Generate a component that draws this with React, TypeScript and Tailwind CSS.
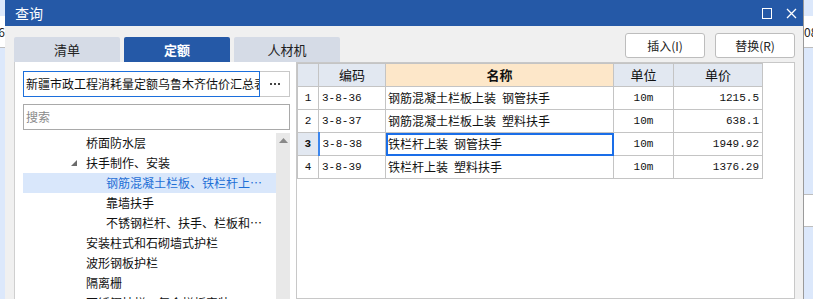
import React from "react";

type Row = { no: number; code: string; name: string; unit: string; price: string };

const rows: Row[] = [
  { no: 1, code: "3-8-36", name: "钢筋混凝土栏板上装\u2002钢管扶手", unit: "10m", price: "1215.5" },
  { no: 2, code: "3-8-37", name: "钢筋混凝土栏板上装\u2002塑料扶手", unit: "10m", price: "638.1" },
  { no: 3, code: "3-8-38", name: "铁栏杆上装\u2002钢管扶手", unit: "10m", price: "1949.92" },
  { no: 4, code: "3-8-39", name: "铁栏杆上装\u2002塑料扶手", unit: "10m", price: "1376.29" },
];

type TreeItem = { text: string; level: 1 | 2; expanded?: boolean; selected?: boolean };

const tree: TreeItem[] = [
  { text: "桥面防水层", level: 1 },
  { text: "扶手制作、安装", level: 1, expanded: true },
  { text: "钢筋混凝土栏板、铁栏杆上…", level: 2, selected: true },
  { text: "靠墙扶手", level: 2 },
  { text: "不锈钢栏杆、扶手、栏板和…", level: 2 },
  { text: "安装柱式和石砌墙式护栏", level: 1 },
  { text: "波形钢板护栏", level: 1 },
  { text: "隔离栅", level: 1 },
  { text: "不锈钢扶栏、复合栏板安装", level: 1 },
];

const cjk = "font-['Noto_Sans_CJK_SC',sans-serif]";
const mono = "font-['Liberation_Mono','Noto_Sans_CJK_SC',monospace]";

function TitleBar() {
  return (
    <div className="flex h-[26px] shrink-0 items-center bg-[#2559a7] pl-[10px] pr-[6px] text-white">
      <span className="text-[14px] leading-[26px]">查询</span>
      <div className="ml-auto flex items-center gap-[14px]">
        <svg width="10" height="11" viewBox="0 0 10 11">
          <rect x="0.5" y="0.5" width="9" height="10" fill="none" stroke="white" strokeWidth="1" />
        </svg>
        <svg width="11" height="11" viewBox="0 0 11 11">
          <path d="M1 1 L10 10 M10 1 L1 10" stroke="white" strokeWidth="1.3" />
        </svg>
      </div>
    </div>
  );
}

function Tabs() {
  const tabs = ["清单", "定额", "人材机"];
  return (
    <div className="flex gap-[4px] self-end">
      {tabs.map((t) => (
        <div
          key={t}
          className={[
            "flex h-[25px] w-[106px] items-center justify-center rounded-t-[2px] text-[13px]",
            t === "定额" ? "bg-[#2559a7] font-bold text-white" : "bg-[#d5dbe6] text-[#222]",
          ].join(" ")}
        >
          {t}
        </div>
      ))}
    </div>
  );
}

function Buttons() {
  return (
    <div className="ml-auto flex gap-[10px] self-start">
      {["插入(I)", "替换(R)"].map((b) => (
        <div
          key={b}
          className="flex h-[25px] w-[80px] items-center justify-center rounded-[3px] border border-[#bdbdbd] bg-white text-[12px] text-[#222]"
        >
          {b}
        </div>
      ))}
    </div>
  );
}

function LeftPanel() {
  return (
    <div className="flex h-full min-h-0 w-[282px] flex-col overflow-hidden border-l border-[#cfcfcf] bg-white pl-[8px] pr-[6px] pt-[9px]">
      <div className="flex h-[26px] shrink-0">
        <div className="flex min-w-0 flex-1 items-center overflow-hidden whitespace-nowrap border border-[#1c6fdc] pl-[2px] text-[12px] text-[#111]">
          新疆市政工程消耗量定额乌鲁木齐估价汇总表
        </div>
        <div className="flex w-[30px] shrink-0 items-center justify-center border border-l-0 border-[#c8c8c8]">
          <svg width="10" height="2" viewBox="0 0 10 2">
            <rect x="0" y="0" width="2" height="2" fill="#444" />
            <rect x="4" y="0" width="2" height="2" fill="#444" />
            <rect x="8" y="0" width="2" height="2" fill="#444" />
          </svg>
        </div>
      </div>
      <div className="mt-[7px] flex h-[26px] shrink-0 items-center border border-[#a9a9a9] pl-[2px] text-[12px] text-[#8a8a8a]">
        搜索
      </div>
      <div className="mt-[3px] flex min-h-0 flex-1">
        <div className="min-w-0 flex-1">
          {tree.map((item) => (
            <div
              key={item.text}
              className={[
                "relative flex h-[20px] items-center whitespace-nowrap text-[12px]",
                item.level === 1 ? "pl-[63px]" : "pl-[83px]",
                item.selected ? "bg-[#d9e7fb] text-[#1f6fd6]" : "text-[#111]",
              ].join(" ")}
            >
              {item.expanded && (
                <svg className="absolute left-[48px] top-[7px]" width="6" height="6" viewBox="0 0 6 6">
                  <polygon points="6,0 6,6 0,6" fill="#6b6b6b" />
                </svg>
              )}
              {item.text}
            </div>
          ))}
        </div>
        <div className="flex w-[14px] shrink-0 justify-center bg-[#e8e8e8] pt-[5px]">
          <svg width="9" height="5" viewBox="0 0 9 5">
            <polygon points="4.5,0 9,5 0,5" fill="#888" />
          </svg>
        </div>
      </div>
    </div>
  );
}

function RightPanel() {
  const cell = "border border-[#c4c4c4] h-[23px] p-0";
  return (
    <div className="h-full min-w-0 flex-1 overflow-hidden border border-[#c8c8c8] bg-white">
      <table className="border-collapse text-[12px] text-[#111]">
        <thead>
          <tr>
            <th className={`${cell} w-[21px] bg-[#e2e8f1]`} />
            <th className={`${cell} w-[67px] bg-[#e2e8f1] text-[13px] font-normal`}>编码</th>
            <th className={`${cell} w-[228px] bg-[#fde7c9] text-[13px] font-bold`}>名称</th>
            <th className={`${cell} w-[60px] bg-[#e2e8f1] text-[13px] font-normal`}>单位</th>
            <th className={`${cell} w-[89px] bg-[#e2e8f1] text-[13px] font-normal`}>单价</th>
          </tr>
        </thead>
        <tbody>
          {rows.map((r) => {
            const sel = r.no === 3;
            return (
              <tr key={r.no}>
                <td className={`${cell} text-center ${mono} text-[11px] ${sel ? "bg-[#e2e8f1] font-bold" : ""}`}>
                  {r.no}
                </td>
                <td className={`${cell} pl-[3px] ${mono} text-[11px] ${sel ? "border-l-2 border-l-[#3b86ee]" : ""}`}>
                  {r.code}
                </td>
                <td className={`${cell} pl-[2px] ${sel ? "outline outline-2 -outline-offset-2 outline-[#1a6ee8]" : ""}`}>
                  {r.name}
                </td>
                <td className={`${cell} text-center ${mono} text-[11px]`}>{r.unit}</td>
                <td className={`${cell} pr-[3px] text-right ${mono} text-[11px]`}>{r.price}</td>
              </tr>
            );
          })}
        </tbody>
      </table>
    </div>
  );
}

function BackStrip({ side }: { side: "left" | "right" }) {
  return (
    <div
      className={[
        "flex shrink-0 flex-col overflow-hidden bg-[#dce8fb] text-[12px] text-[#222]",
        side === "left" ? "w-[5px] items-end" : "w-[10px] border-l border-[#9a9a9a]",
      ].join(" ")}
    >
      <div className="h-[16px] shrink-0" />
      <div className="flex h-[32px] shrink-0 items-center whitespace-nowrap border-b border-[#bdbdbd] bg-white">
        {side === "left" ? "6" : "08"}
      </div>
      {side === "right" && (
        <>
          <div className="h-[146px] shrink-0" />
          <div className="h-[33px] shrink-0 border-y border-[#bdbdbd] bg-white" />
        </>
      )}
    </div>
  );
}

export default function App() {
  return (
    <div className={`flex h-[299px] w-[813px] overflow-hidden ${cjk}`}>
      <BackStrip side="left" />
      <div className="flex h-full w-[798px] flex-col">
        <TitleBar />
        <div className="flex min-h-0 flex-1 flex-col bg-[#f0f0f0] pl-[9px] pr-[8px] pt-[7px]">
          <div className="flex h-[29px] shrink-0">
            <Tabs />
            <Buttons />
          </div>
          <div className="flex min-h-0 flex-1">
            <LeftPanel />
            <RightPanel />
          </div>
        </div>
      </div>
      <BackStrip side="right" />
    </div>
  );
}
